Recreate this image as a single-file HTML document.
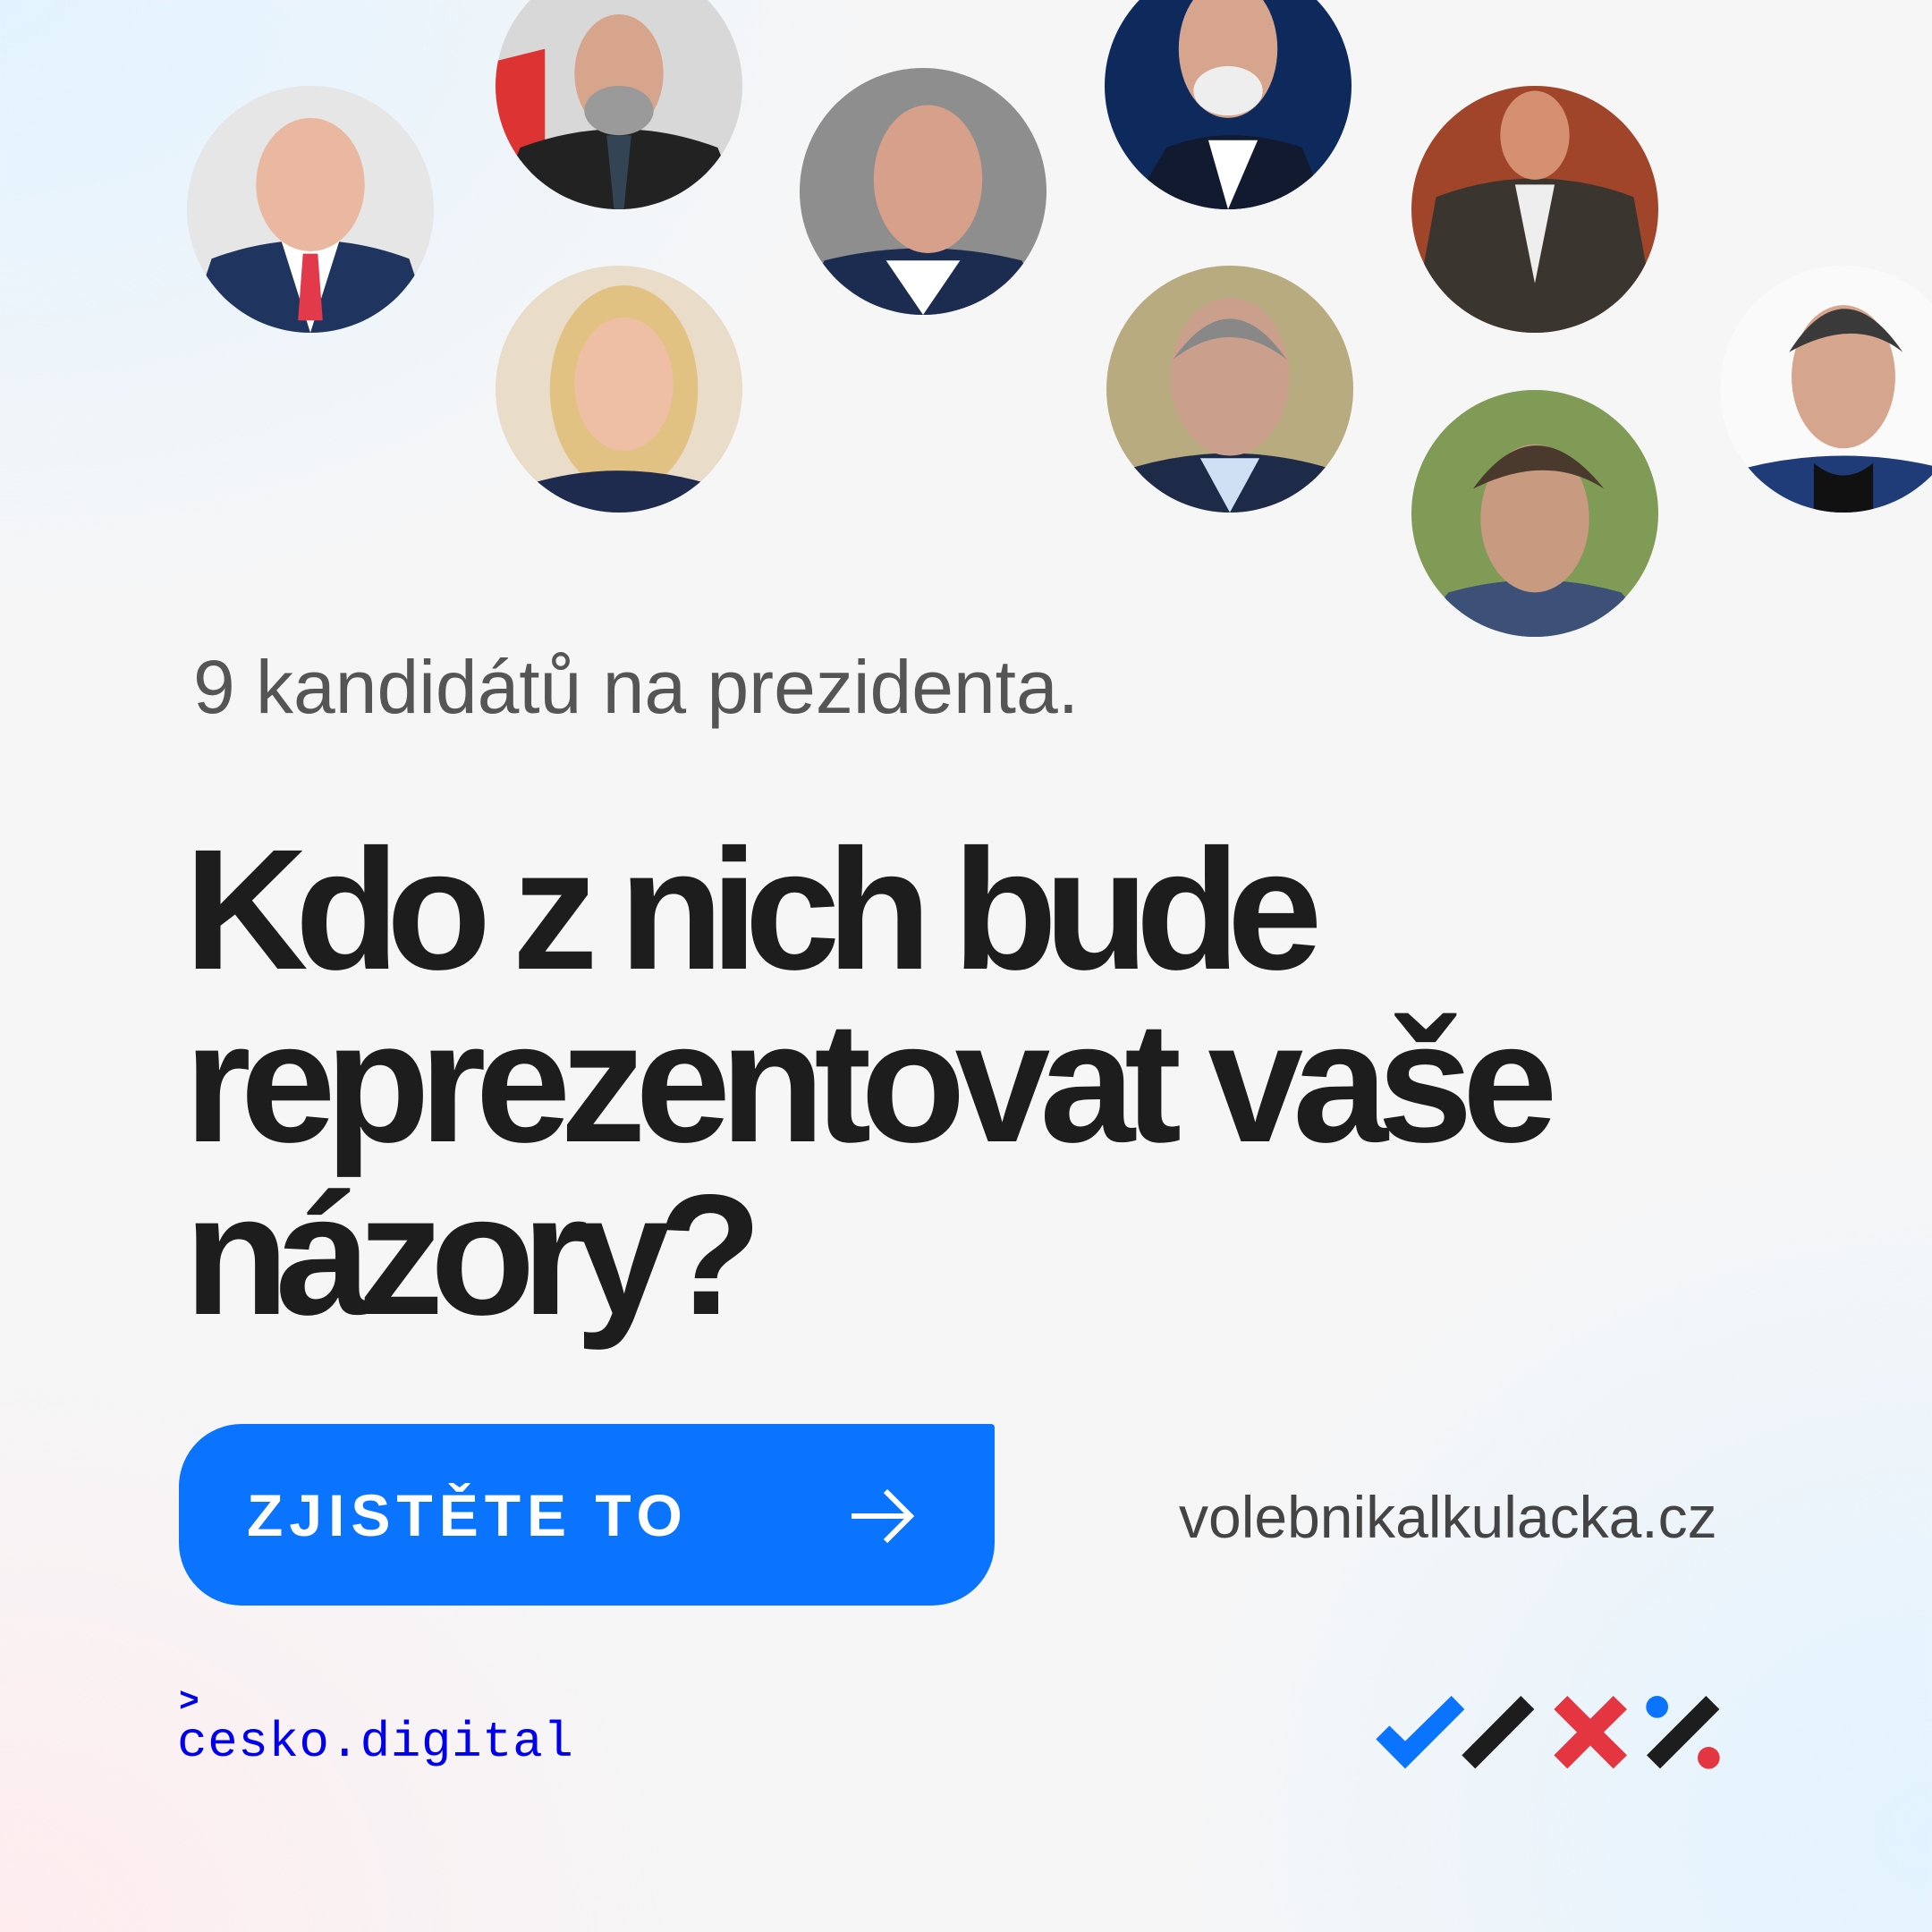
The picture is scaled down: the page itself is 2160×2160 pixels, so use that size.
<!DOCTYPE html>
<html><head><meta charset="utf-8"><style>
html,body{margin:0;padding:0}
body{width:2160px;height:2160px;position:relative;overflow:hidden;font-family:"Liberation Sans",sans-serif;
background:
radial-gradient(ellipse 1100px 900px at 0% 100%, rgba(255,235,238,0.9), rgba(255,235,238,0) 70%),
radial-gradient(ellipse 1200px 1100px at 100% 95%, rgba(226,243,255,1), rgba(226,243,255,0) 70%),
radial-gradient(ellipse 1300px 900px at 0% 0%, rgba(226,243,255,1), rgba(226,243,255,0) 75%),
#f6f6f7;}
.p{position:absolute;width:276px;height:276px;border-radius:50%;overflow:hidden}
.p svg{width:100%;height:100%;display:block}
.t1{position:absolute;left:216px;top:720px;font-size:84px;color:#555;white-space:nowrap}
.h{position:absolute;left:206px;top:920px;font-size:192px;font-weight:bold;color:#1d1d1d;line-height:193px;letter-spacing:-15px;white-space:nowrap}
.btn{position:absolute;left:200px;top:1592px;width:912px;height:203px;background:#0a74ff;border-radius:70px 4px 70px 70px}
.btn span{position:absolute;left:76px;top:64px;font-size:66px;font-weight:bold;color:#fff;letter-spacing:7px;white-space:nowrap}
.url{position:absolute;left:1318px;top:1658px;font-size:66px;color:#444;white-space:nowrap}
.cd{position:absolute;left:198px;top:1916px;font-family:"Liberation Mono",monospace;font-size:56px;color:#0000ee;white-space:nowrap;letter-spacing:0.5px}
.chev{position:absolute;left:200px;top:1882px;font-family:"Liberation Mono",monospace;font-size:38px;color:#0000ee;font-weight:bold}
</style></head><body>

<div class="p" style="left:209px;top:96px"><svg viewBox="0 0 100 100"><rect width="100" height="100" fill="#e6e6e6"/><path d="M0 100 L10 70 Q50 55 90 70 L100 100Z" fill="#1f3560"/><path d="M38 62 L50 100 L62 62Z" fill="#fff"/><path d="M47 68 L53 68 L55 95 L45 95Z" fill="#e23a4a"/><ellipse cx="50" cy="40" rx="22" ry="27" fill="#eab8a0"/></svg></div>
<div class="p" style="left:554px;top:-42px"><svg viewBox="0 0 100 100"><rect width="100" height="100" fill="#d8d8d8"/><path d="M0 40 L20 35 L20 80 L0 80Z" fill="#d33"/><path d="M0 100 L10 75 Q50 60 90 75 L100 100Z" fill="#222"/><ellipse cx="50" cy="45" rx="18" ry="24" fill="#d7a48c"/><ellipse cx="50" cy="60" rx="14" ry="10" fill="#9a9a9a"/><path d="M45 70 L55 70 L52 100 L48 100Z" fill="#345"/></svg></div>
<div class="p" style="left:894px;top:76px"><svg viewBox="0 0 100 100"><rect width="100" height="100" fill="#8e8e8e"/><path d="M0 100 L10 78 Q50 68 90 78 L100 100Z" fill="#1c2c50"/><path d="M35 78 L50 100 L65 78Z" fill="#fff"/><ellipse cx="52" cy="45" rx="22" ry="30" fill="#d7a08a"/></svg></div>
<div class="p" style="left:1235px;top:-42px"><svg viewBox="0 0 100 100"><rect width="100" height="100" fill="#0e2a5c"/><path d="M10 100 L25 75 Q50 65 80 75 L90 100Z" fill="#111a2e"/><path d="M42 72 L50 100 L62 72Z" fill="#fff"/><ellipse cx="50" cy="35" rx="20" ry="28" fill="#d7a58e"/><ellipse cx="50" cy="52" rx="14" ry="10" fill="#eee"/></svg></div>
<div class="p" style="left:1578px;top:96px"><svg viewBox="0 0 100 100"><rect width="100" height="100" fill="#a0452a"/><path d="M0 100 L10 45 Q50 30 90 45 L100 100Z" fill="#3b3530"/><path d="M42 40 L50 80 L58 40Z" fill="#eee"/><ellipse cx="50" cy="20" rx="14" ry="18" fill="#d49070"/></svg></div>
<div class="p" style="left:554px;top:297px"><svg viewBox="0 0 100 100"><rect width="100" height="100" fill="#e9dcc8"/><ellipse cx="52" cy="50" rx="30" ry="42" fill="#e2c283"/><path d="M0 100 L15 88 Q50 78 85 88 L100 100Z" fill="#1e2a4e"/><ellipse cx="52" cy="48" rx="20" ry="27" fill="#efbfa5"/></svg></div>
<div class="p" style="left:1237px;top:297px"><svg viewBox="0 0 100 100"><rect width="100" height="100" fill="#b9ab80"/><path d="M0 100 L10 82 Q50 70 90 82 L100 100Z" fill="#1d2a48"/><path d="M38 78 L50 100 L62 78Z" fill="#cfe0f5"/><ellipse cx="50" cy="45" rx="24" ry="32" fill="#caa08c"/><path d="M27 38 Q50 5 73 38 Q50 20 27 38Z" fill="#888"/></svg></div>
<div class="p" style="left:1578px;top:436px"><svg viewBox="0 0 100 100"><rect width="100" height="100" fill="#7f9b55"/><path d="M0 100 L15 82 Q50 72 85 82 L100 100Z" fill="#3c5078"/><ellipse cx="50" cy="52" rx="22" ry="30" fill="#c89a80"/><path d="M25 40 Q50 5 78 40 Q55 25 25 40Z" fill="#4a3a2e"/></svg></div>
<div class="p" style="left:1923px;top:297px"><svg viewBox="0 0 100 100"><rect width="100" height="100" fill="#fafafa"/><path d="M0 100 L10 82 Q50 72 90 82 L100 100Z" fill="#1f3c78"/><path d="M38 80 Q50 90 62 80 L62 100 L38 100Z" fill="#111"/><ellipse cx="50" cy="45" rx="21" ry="29" fill="#d6a58e"/><path d="M28 35 Q50 0 74 35 Q55 20 28 35Z" fill="#3a3a3a"/></svg></div>

<div class="t1">9 kandidátů na prezidenta.</div>
<div class="h">Kdo z nich bude<br><span style="letter-spacing:-12px">reprezentovat vaše</span><br>názory?</div>

<div class="btn"><span>ZJISTĚTE TO</span>
<svg style="position:absolute;left:748px;top:70px" width="76" height="66" viewBox="0 0 76 66"><path d="M4 33 H70 M42 5 L70 33 L42 61" fill="none" stroke="#fff" stroke-width="6"/></svg></div>
<div class="url">volebnikalkulacka.cz</div>

<div class="chev">&gt;</div>
<div class="cd">cesko.digital</div>

<svg style="position:absolute;left:1500px;top:1850px" width="450" height="160" viewBox="0 0 1350 480">
<polygon points="115,283 160,238 213,290 368,138 412,183 213,382" fill="#0a74ff"/>
<polygon points="403,337 601,138 646,183 448,382" fill="#1d1d1d"/>
<polygon points="712,183 757,138 834,215 911,138 957,183 879,260 957,337 911,382 834,305 757,382 712,337 789,260" fill="#e33641"/>
<polygon points="1023,337 1222,138 1267,183 1068,382" fill="#1d1d1d"/>
<circle cx="1058" cy="175" r="37" fill="#0a74ff"/>
<circle cx="1231" cy="346" r="37" fill="#e33641"/>
</svg>
</body></html>
